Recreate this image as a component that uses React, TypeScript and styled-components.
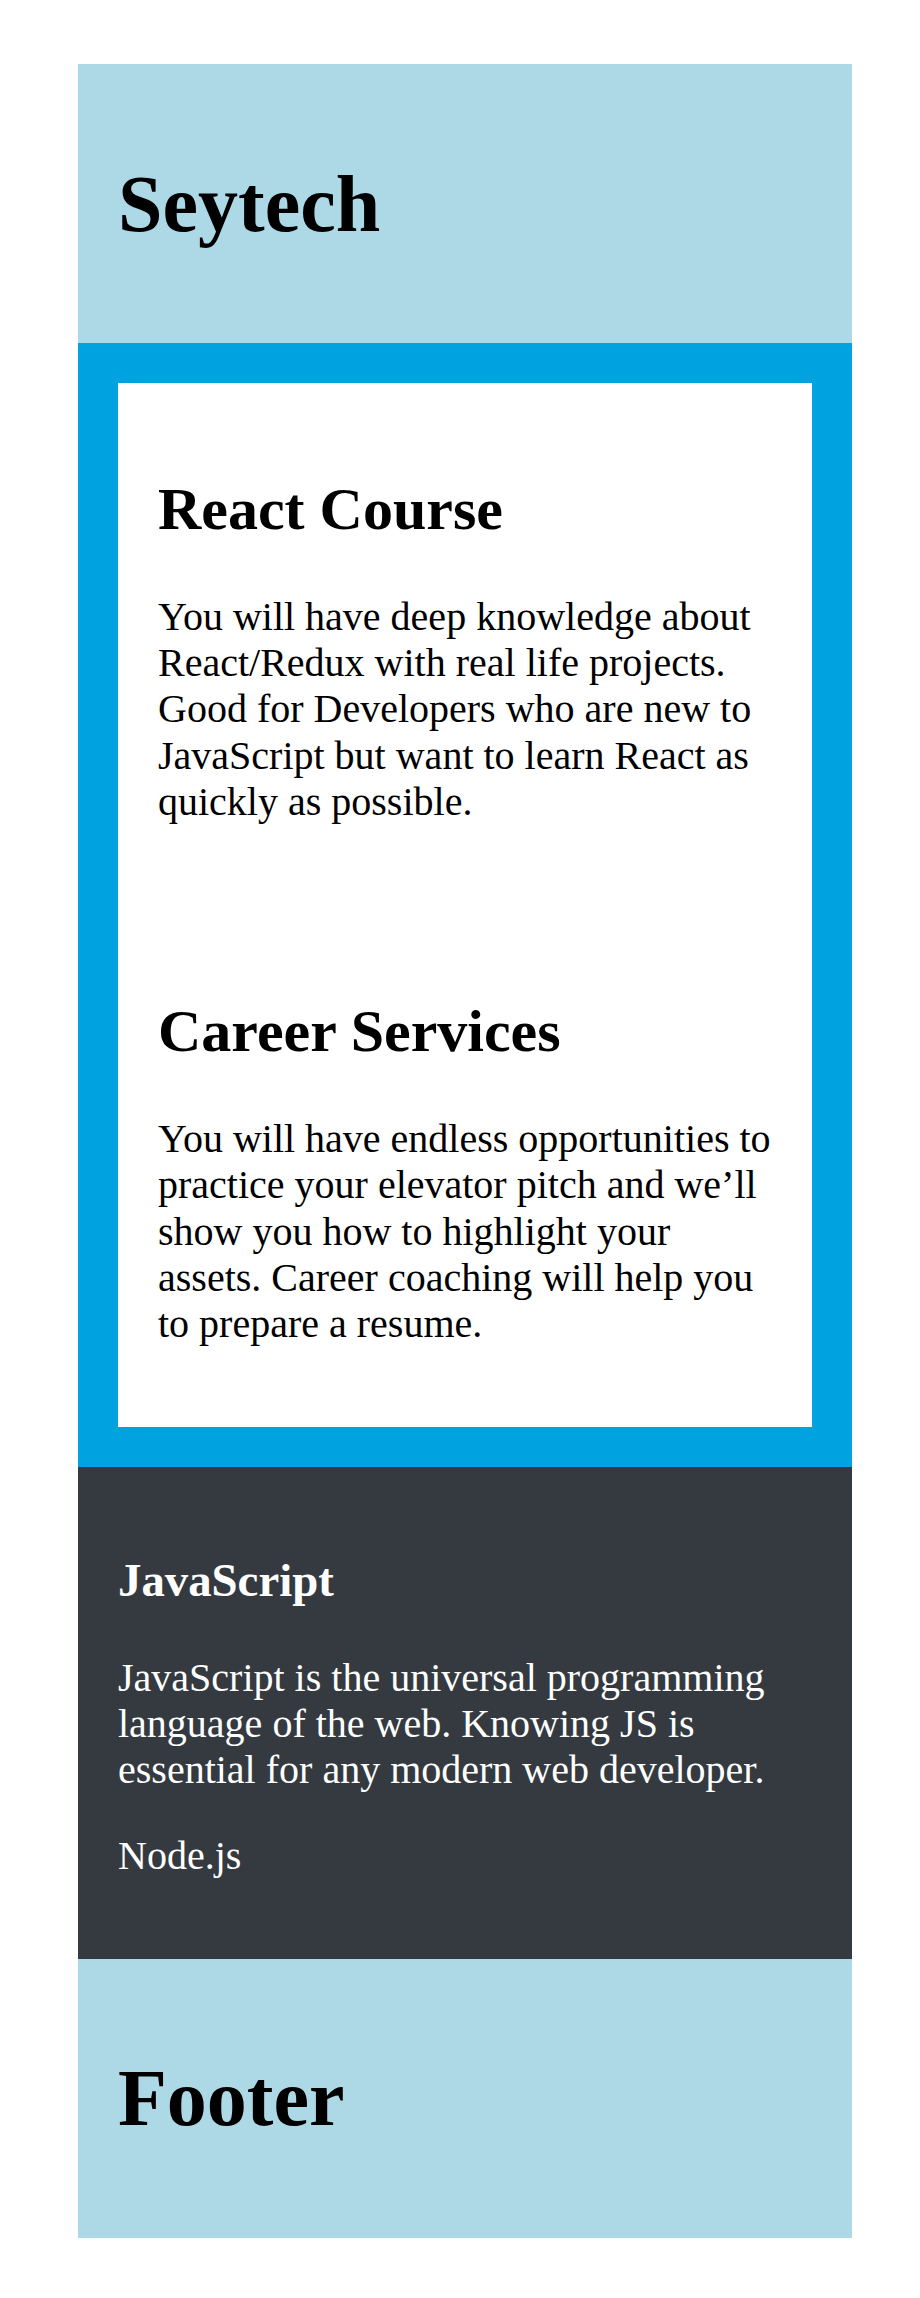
import React from "react";
import styled, { createGlobalStyle } from "styled-components";

const GlobalStyle = createGlobalStyle`
  html, body {
    margin: 0;
    padding: 0;
    background: #ffffff;
  }
  body {
    font-family: "Liberation Serif", "Times New Roman", Times, serif;
    font-size: 40px;
    line-height: 1.15;
    color: #000000;
  }
`;

const Page = styled.div`
  padding: 64px 68px 61px 78px;
`;

const Layout = styled.div`
  display: flex;
  flex-direction: column;
`;

const Band = styled.header<{ $bg: string }>`
  background: ${(p) => p.$bg};
  padding: 40px;
`;

const Title = styled.h1`
  font-size: 80px;
  line-height: 92px;
  font-weight: 700;
  margin: 53.6px 0;
`;

const Main = styled.main`
  background: #00a3e0;
  padding: 40px;
`;

const Card = styled.div`
  background: #ffffff;
  display: flex;
  flex-direction: column;
`;

const Section = styled.section`
  padding: 40px;
`;

const SectionTitle = styled.h2`
  font-size: 60px;
  line-height: 70px;
  font-weight: 700;
  margin: 50.4px 0;
`;

const Text = styled.p<{ $lh?: number }>`
  font-size: 40px;
  line-height: ${(p) => p.$lh ?? 46}px;
  margin: 40px 0;
`;

const Aside = styled.aside`
  background: #343a40;
  color: #ffffff;
  padding: 40px;
`;

const AsideTitle = styled.h3`
  font-size: 46.8px;
  line-height: 53.8px;
  font-weight: 700;
  margin: 46.8px 0;
`;

const courses = [
  {
    title: "React Course",
    text: "You will have deep knowledge about React/Redux with real life projects. Good for Developers who are new to JavaScript but want to learn React as quickly as possible.",
  },
  {
    title: "Career Services",
    text: "You will have endless opportunities to practice your elevator pitch and we\u2019ll show you how to highlight your assets. Career coaching will help you to prepare a resume.",
  },
];

export default function App() {
  return (
    <>
      <GlobalStyle />
      <Page>
        <Layout>
          <Band $bg="#add8e6">
            <Title>Seytech</Title>
          </Band>
          <Main>
            <Card>
              {courses.map((c) => (
                <Section key={c.title}>
                  <SectionTitle>{c.title}</SectionTitle>
                  <Text $lh={46.25}>{c.text}</Text>
                </Section>
              ))}
            </Card>
          </Main>
          <Aside>
            <AsideTitle>JavaScript</AsideTitle>
            <Text>
              JavaScript is the universal programming language of the web.
              Knowing JS is essential for any modern web developer.
            </Text>
            <Text>Node.js</Text>
          </Aside>
          <Band as="footer" $bg="#add8e6">
            <Title>Footer</Title>
          </Band>
        </Layout>
      </Page>
    </>
  );
}
